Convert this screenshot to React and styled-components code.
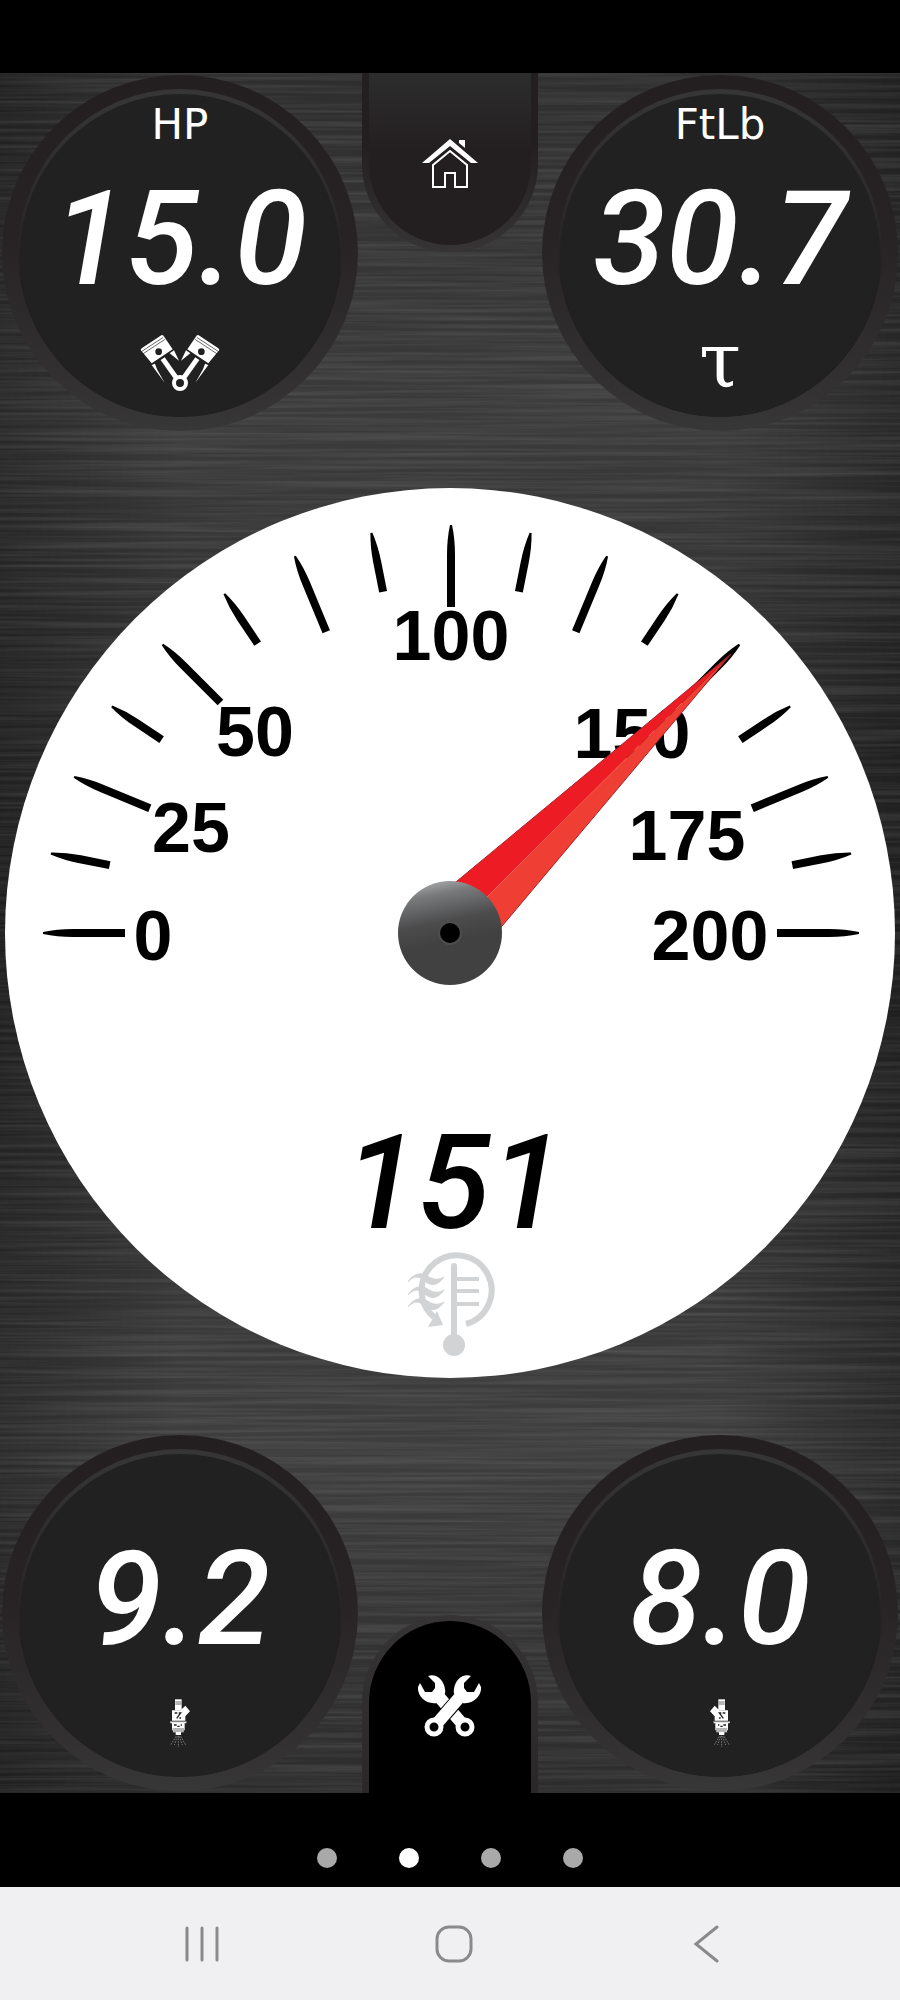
import React from 'react';
import styled, { createGlobalStyle } from 'styled-components';

const gauges = {
  power: { name: 'Horsepower', label: 'HP', value: '15.0' },
  torque: { name: 'Torque', label: 'FtLb', value: '30.7' },
  injectorLeft: { name: 'Injector left', value: '9.2' },
  injectorRight: { name: 'Injector right', value: '8.0' },
};

const dialLabels = [
  { text: '0', x: 148, y: 472 },
  { text: '25', x: 186, y: 364 },
  { text: '50', x: 250, y: 268 },
  { text: '100', x: 446, y: 172 },
  { text: '150', x: 627, y: 270 },
  { text: '175', x: 682, y: 372 },
  { text: '200', x: 705, y: 472 },
];

const pages = [
  { id: 1, active: false },
  { id: 2, active: true },
  { id: 3, active: false },
  { id: 4, active: false },
];

const App = () => {
  return <>
    <GlobalStyle />
    <Screen>
      <StatusBar />
      <Dashboard>
        <BrushedMetal />
        <GaugeRow>
          <Gauge {...gauges.power}><PistonIcon /></Gauge>
          <HomeTab type="button" aria-label="Home"><HomeIcon /></HomeTab>
          <Gauge {...gauges.torque}><Tau>τ</Tau></Gauge>
        </GaugeRow>
        <DialWrapper>
          <Dial value="151" />
        </DialWrapper>
        <GaugeRow>
          <Gauge {...gauges.injectorLeft}><InjectorIcon /></Gauge>
          <ToolsTab type="button" aria-label="Tools"><ToolsIcon /></ToolsTab>
          <Gauge {...gauges.injectorRight}><InjectorIcon flipped /></Gauge>
        </GaugeRow>
      </Dashboard>
      <Pager>
        {pages.map((page) => {
          return <Dot key={page.id} type="button" $active={page.active} aria-label={`Page ${page.id}`} />
        })}
      </Pager>
      <NavBar>
        <NavButton type="button" aria-label="Recents">
          <svg width="34" height="38" viewBox="0 0 34 38" stroke="#8a8a8c" strokeWidth="3" strokeLinecap="round">
            <path d="M2 3V35M17 3V35M32 3V35" />
          </svg>
        </NavButton>
        <NavButton type="button" aria-label="Home screen">
          <svg width="38" height="38" viewBox="0 0 38 38" fill="none" stroke="#8a8a8c" strokeWidth="3">
            <rect x="2" y="2" width="34" height="34" rx="12" />
          </svg>
        </NavButton>
        <NavButton type="button" aria-label="Back">
          <svg width="26" height="38" viewBox="0 0 26 38" fill="none" stroke="#8a8a8c" strokeWidth="3" strokeLinecap="round">
            <path d="M24 2L3 19L24 36" />
          </svg>
        </NavButton>
      </NavBar>
    </Screen>
  </>;
};

const Gauge = ({ name, label, value, children }) => {
  return <Rim aria-label={name}>
    <Lip>
      <Face>
        <GaugeLabel>{label}</GaugeLabel>
        <GaugeValue>{value}</GaugeValue>
        <GaugeIcon>{children}</GaugeIcon>
      </Face>
    </Lip>
  </Rim>
};

const BrushedMetal = () => {
  return <Backdrop aria-hidden="true" preserveAspectRatio="none">
    <filter id="brushed" x="0" y="0" width="100%" height="100%">
      <feTurbulence type="fractalNoise" baseFrequency="0.004 0.25" numOctaves="3" seed="7" />
      <feColorMatrix values="0 0 0 0 1  0 0 0 0 1  0 0 0 0 1  1.6 0 0 0 -0.55" />
    </filter>
    <rect width="100%" height="100%" filter="url(#brushed)" opacity="0.12" />
  </Backdrop>
};

// ticks run clockwise from 0 (left) to 200 (right)
const Dial = ({ value }) => {
  const ticks = Array.from({ length: 17 }, (_, i) => i);
  return <svg viewBox="0 0 890 890" role="img" aria-label={`Temperature ${value}`}>
    <defs>
      <linearGradient id="hub" x1="0.3" y1="0" x2="0.5" y2="1">
        <stop offset="0" stopColor="#a7a9ab" />
        <stop offset="0.14" stopColor="#77797b" />
        <stop offset="0.4" stopColor="#4c4c4d" />
        <stop offset="0.6" stopColor="#414142" />
      </linearGradient>
    </defs>
    <circle cx="445" cy="445" r="445" fill="#fff" />
    {ticks.map((i) => {
      const inner = i % 2 ? 348 : 326;
      return <path
        key={i}
        d={`M-4 ${-inner}L-4 -378Q-4 -394 -1 -408H1Q4 -394 4 -378L4 ${-inner}Z`}
        transform={`translate(446 445) rotate(${-90 + i * 11.25})`}
      />
    })}
    {dialLabels.map((label) => {
      return <DialLabel key={label.text} x={label.x} y={label.y}>{label.text}</DialLabel>
    })}
    <path d="M726 166L440 403L482 409Z" fill="#ed1c24" />
    <path d="M726 166L475 416L487 450Z" fill="#ef3e33" />
    <path d="M726 166L440 403M726 166L487 450" stroke="#a8232b" strokeWidth="1" />
    <circle cx="445" cy="445" r="52" fill="url(#hub)" />
    <circle cx="445" cy="445" r="11" fill="#000" stroke="#4d4d4d" strokeWidth="2" />
    <DialValue x="449" y="740">{value}</DialValue>
    <g fill="none" stroke="#d1d3d4" strokeWidth="6">
      <path d="M461 836A35 35 0 1 0 429 829" />
      <path d="M449 778V852" strokeLinecap="round" />
      <path d="M451 791H474M451 803H474M451 816H474" strokeWidth="4" />
      {[0, 13, 25].map((dy) => {
        return <path
          key={dy}
          d="M403 794C410 786 416 789 421 794C428 799 434 796 439 789C434 792 429 792 424 789C416 783 408 786 403 794Z"
          transform={`translate(0 ${dy})`}
          fill="#d1d3d4"
          strokeWidth="1"
        />
      })}
    </g>
    <path d="M432 823L438 837L423 839Z" fill="#d1d3d4" />
    <circle cx="449" cy="857" r="11" fill="#d1d3d4" />
  </svg>
};

const HomeIcon = () => {
  return <svg width="56" height="50" viewBox="422 139 56 50">
    <path d="M422 163L450 139L478 163H471L450 146L429 163Z" fill="#fff" />
    <path d="M459 140H465V148L459 143Z" fill="#fff" />
    <path d="M433 187V165L450 151L467 165V187H455V173H445V187Z" fill="none" stroke="#fff" strokeWidth="2" />
  </svg>
};

const ToolsIcon = () => {
  return <svg width="64" height="64" viewBox="8 12 64 64">
    <Wrench />
    <g transform="translate(79 0) scale(-1 1)">
      <path d="M27 32L50 58" stroke="#000" strokeWidth="14" />
      <Wrench />
    </g>
  </svg>
};

const Wrench = () => {
  return <>
    <path d="M24 28L55 64" stroke="#fff" strokeWidth="12" />
    <path d="M18 13C26 10 34 17 35 26C36 29 34 32 34 34L27 40C14 42 7 31 8 24L10 20L15 29L22 29L25 25V20Z" fill="#fff" />
    <circle cx="55" cy="64" r="7" fill="#000" stroke="#fff" strokeWidth="5" />
  </>
};

const PistonIcon = () => {
  return <svg width="80" height="58" viewBox="60 72 240 174">
    <Piston />
    <g transform="translate(360 0) scale(-1 1)"><Piston /></g>
    <circle cx="180" cy="219" r="18" fill="#212121" stroke="#fff" strokeWidth="12" />
  </svg>
};

const Piston = () => {
  return <>
    <path d="M62 120Q62 117 66 114L124 76Q128 74 131 78L158 118L95 160Z" fill="#fff" />
    <path d="M64 125L130 82M68 132L135 88" stroke="#212121" strokeWidth="2" />
    <circle cx="116" cy="125" r="10" fill="#212121" />
    <path d="M128 146L172 208" stroke="#fff" strokeWidth="15" />
    <path d="M95 165L105 161L111 178L134 218Z" fill="#fff" />
    <path d="M149 130L162 121L177 152Z" fill="#fff" />
  </>
};

const InjectorIcon = ({ flipped }) => {
  return <svg width="20" height="48" viewBox="66 56 60 144">
    <g transform={flipped ? 'translate(192 0) scale(-1 1)' : undefined}>
      <path d="M81 57H101V90H81Z" fill="#fff" />
      <path d="M72 90H98L112 76L126 93L112 108V121H72Z" fill="#fff" />
      <path d="M67 122H115V129H110V150H107V156H99V164H83V156H75V150H72V129H67Z" fill="#fff" />
      <path d="M82 65H100M82 71H100M68 124H114M74 146H108M76 152H107" stroke="#212121" strokeWidth="2" />
      <path d="M80 98H88M92 98H98L86 114M94 113H99M78 134H86M88 138H95M98 134H102" fill="none" stroke="#212121" strokeWidth="4" />
      <path d="M84 168L68 194M88 168L79 194M91 166V200M94 168L103 194M98 168L113 194" stroke="#a5a5a5" strokeWidth="2" strokeDasharray="5 3" />
    </g>
  </svg>
};

const GlobalStyle = createGlobalStyle`
  * {
    box-sizing: border-box;
  }
  body {
    margin: 0;
    background: #000;
  }
  button {
    border: 0;
    padding: 0;
    background: none;
    cursor: pointer;
  }
  svg {
    display: block;
  }
`;

const Screen = styled.div`
  display: flex;
  flex-direction: column;
  color: #fff;
`;

const StatusBar = styled.div`
  height: 73px;
  background: #000;
`;

const Dashboard = styled.main`
  position: relative;
  isolation: isolate;
  display: flex;
  flex-direction: column;
  gap: 55px;
  overflow: hidden;
  background:
    linear-gradient(90deg, rgba(0, 0, 0, 0.3), transparent 20%, transparent 80%, rgba(0, 0, 0, 0.3)),
    linear-gradient(#2e2e2e, #3b3b3b 20%, #343434 30%, #2a2a2a 50%, #363636 68%, #3e3e3e 80%, #2c2c2c);
`;

const Backdrop = styled.svg`
  position: absolute;
  inset: 0;
  z-index: -1;
  width: 100%;
  height: 100%;
`;

const GaugeRow = styled.div`
  display: grid;
  grid-template-columns: 356fr 176fr 356fr;
  gap: 4px;
  padding: 0 2px;
`;

const Rim = styled.section`
  aspect-ratio: 1;
  margin: 2px 0;
  padding: 14px 16px;
  border-radius: 50%;
  background: linear-gradient(#231f20, #272324 45%, #333132 88%, #383737);
`;

const Lip = styled.div`
  height: 100%;
  padding: 5px 2px 0;
  border-radius: 50%;
  background: linear-gradient(#363636, #2c2a2b 35%, #231f20 60%);
`;

const Face = styled.div`
  display: grid;
  grid-template-rows: 44px 120px 64px;
  row-gap: 32px;
  justify-items: center;
  height: 100%;
  padding-top: 9px;
  border-radius: 50%;
  background: #212121;
`;

const GaugeLabel = styled.h2`
  margin: 0;
  font-family: "DejaVu Sans", sans-serif;
  font-size: 42px;
  font-weight: 400;
  line-height: 44px;
`;

const GaugeValue = styled.p`
  margin: 0;
  font-family: Roboto, "Liberation Sans", sans-serif;
  font-size: 132px;
  font-style: italic;
  font-weight: 500;
  line-height: 120px;
`;

const GaugeIcon = styled.div`
  display: grid;
  place-items: center;
`;

const Tau = styled.span`
  padding-bottom: 4px;
  font-family: "DejaVu Serif", serif;
  font-size: 76px;
  line-height: 32px;
`;

const Tab = styled.button`
  display: grid;
  place-items: center;
  border: 0 solid transparent;
`;

const HomeTab = styled(Tab)`
  height: 179px;
  padding-top: 10px;
  border-width: 0 7px 7px;
  border-radius: 0 0 88px 88px;
  background:
    linear-gradient(#2d2d2d, #231f20 45%) padding-box,
    linear-gradient(#231f20 40%, #363435) border-box;
`;

const ToolsTab = styled(Tab)`
  align-self: end;
  height: 178px;
  border-width: 6px 7px 0;
  border-radius: 88px 88px 0 0;
  background:
    linear-gradient(#000, #000) padding-box,
    linear-gradient(#363435, #2a2728) border-box;
`;

const DialWrapper = styled.div`
  padding: 0 5px;
`;

const DialLabel = styled.text`
  font-family: "Liberation Sans", sans-serif;
  font-size: 70px;
  font-weight: 700;
  text-anchor: middle;
`;

const DialValue = styled.text`
  font-family: Roboto, "Liberation Sans", sans-serif;
  font-size: 132px;
  font-style: italic;
  font-weight: 500;
  text-anchor: middle;
`;

const Pager = styled.nav`
  display: flex;
  justify-content: center;
  gap: 62px;
  height: 94px;
  padding-top: 55px;
  background: #000;
`;

const Dot = styled.button`
  && {
    width: 20px;
    height: 20px;
    border-radius: 50%;
    background: ${({ $active }) => ($active ? '#fff' : '#a9a9a9')};
  }
`;

const NavBar = styled.nav`
  display: grid;
  grid-template-columns: repeat(3, 1fr);
  height: 113px;
  padding: 0 68px 0 76px;
  background: #f0f0f2;
`;

const NavButton = styled.button`
  display: grid;
  place-items: center;
`;

export default App;
